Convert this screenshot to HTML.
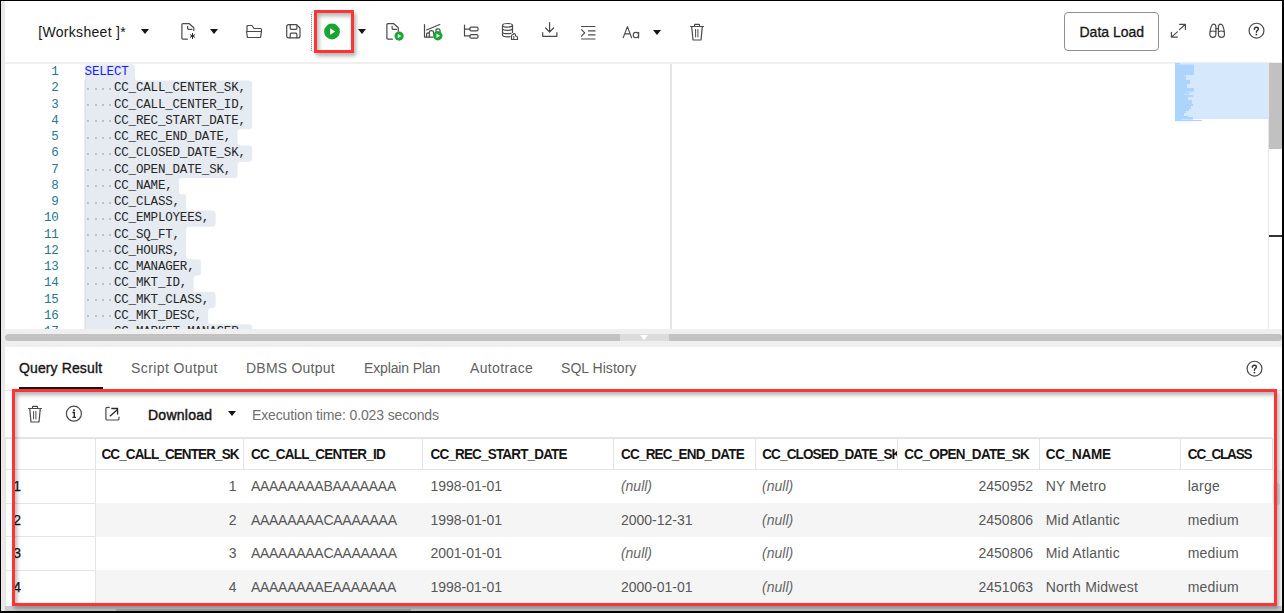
<!DOCTYPE html>
<html><head><meta charset="utf-8">
<style>
*{box-sizing:border-box;margin:0;padding:0}
html,body{width:1284px;height:613px;overflow:hidden;background:#fff}
body{position:relative;font-family:"Liberation Sans",sans-serif;color:#161513}
.a{position:absolute}
.tri{position:absolute;width:0;height:0;border-left:4.5px solid transparent;border-right:4.5px solid transparent;border-top:5px solid #161513}
svg{position:absolute;overflow:visible}
.mono{font-family:"Liberation Mono",monospace;font-size:12px}
.ln{position:absolute;left:20px;width:38.6px;text-align:right;color:#237893;font-family:"Liberation Mono",monospace;font-size:12.5px;letter-spacing:-0.17px;height:16.25px;line-height:16.25px}
.cl{position:absolute;left:85px;height:16.25px;line-height:16.25px;font-family:"Liberation Mono",monospace;font-size:12.5px;letter-spacing:-0.17px;color:#262626;white-space:pre}
.sel{position:absolute;left:84px;height:16.2px;background:#e5ebf1}
.tab{position:absolute;top:360.4px;font-size:14px;color:#616161;white-space:pre}
.hd{position:absolute;top:447.3px;font-size:13.5px;font-weight:bold;color:#161513;white-space:pre;letter-spacing:-0.9px;transform:scaleY(1.09);transform-origin:0 12.2px}
.cell{position:absolute;font-size:14px;color:#575757;white-space:pre}
.nul{font-style:italic;color:#666}
</style></head><body>
<!-- left gray strip -->
<div class="a" style="left:1px;top:1px;width:4px;height:611px;background:#e9e9e9"></div>
<!-- toolbar bottom border -->
<div class="a" style="left:5px;top:62px;width:1277px;height:2px;background:#f0f0f0"></div>

<!-- TOOLBAR -->
<div class="a" style="left:38.3px;top:24.3px;font-size:14px;white-space:pre;color:#161513;letter-spacing:0.3px">[Worksheet ]*</div>
<div class="tri" style="left:140.5px;top:29px"></div>

<svg style="left:181px;top:23px" width="16" height="18" viewBox="0 0 16 18"><path d="M6.4 16.2H1.9Q0.9 16.2 0.9 15.2V1.7Q0.9 0.7 1.9 0.7H8.3L12.8 4.8V7.4" stroke="#4a4a4a" fill="none" stroke-width="1.2" stroke-linecap="round" stroke-linejoin="round"/><path d="M6.6 3.3V5.3Q6.6 6.3 7.6 6.3H11" stroke="#4a4a4a" fill="none" stroke-width="1.2" stroke-linecap="round" stroke-linejoin="round"/><path d="M11.5 10V16M8.9 11.5L14.1 14.5M8.9 14.5L14.1 11.5" stroke="#222" stroke-width="0.95" fill="none"/></svg>
<div class="tri" style="left:210.3px;top:28.7px"></div>
<svg style="left:245px;top:23px" width="18" height="16" viewBox="0 0 18 16"><path d="M2 7.5V3.5Q2 2.5 3 2.5H7L9 5.5H15.5Q16.5 5.5 16.5 6.5V8" stroke="#4a4a4a" fill="none" stroke-width="1.2" stroke-linecap="round" stroke-linejoin="round"/><path d="M1.5 8.5H16.5L15.5 14.5H2.5Z" stroke="#4a4a4a" fill="none" stroke-width="1.2" stroke-linecap="round" stroke-linejoin="round"/></svg>
<svg style="left:285px;top:23px" width="16" height="16" viewBox="0 0 16 16"><path d="M1.7 3.7Q1.7 1.6 3.7 1.6H11.5L15 5V12.9Q15 14.9 13 14.9H3.7Q1.7 14.9 1.7 12.9Z" stroke="#4a4a4a" fill="none" stroke-width="1.2" stroke-linecap="round" stroke-linejoin="round"/><path d="M5.2 1.7V5.3Q5.2 6.3 6.2 6.3H10.9Q11.9 6.3 11.9 5.3V2.2M5.2 14.8V11.2Q5.2 10.2 6.2 10.2H10.9Q11.9 10.2 11.9 11.2V14.8" stroke="#4a4a4a" fill="none" stroke-width="1.2" stroke-linecap="round" stroke-linejoin="round"/></svg>
<svg style="left:322px;top:21px" width="20" height="20" viewBox="0 0 20 20"><circle cx="10" cy="10.5" r="7.9" fill="#1aa532"/><path d="M8.2 7.3L13.2 10.5L8.2 13.7Z" fill="#fff"/></svg>
<div class="a" style="left:310.5px;top:12px;width:2px;height:40px;border-left:1.5px dotted #777;border-radius:3px 0 0 3px"></div>
<div class="tri" style="left:358.4px;top:28.8px"></div>
<svg style="left:386px;top:23px" width="18" height="18" viewBox="0 0 18 18"><path d="M6.4 16.2H1.9Q0.9 16.2 0.9 15.2V1.7Q0.9 0.7 1.9 0.7H7.8L12.3 4.8V8.3" stroke="#4a4a4a" fill="none" stroke-width="1.2" stroke-linecap="round" stroke-linejoin="round"/><path d="M6.1 3.3V5.3Q6.1 6.3 7.1 6.3H10.5" stroke="#4a4a4a" fill="none" stroke-width="1.2" stroke-linecap="round" stroke-linejoin="round"/><circle cx="13.1" cy="13.1" r="4.6" fill="#1aa532"/><path d="M11.8 10.9L15.3 13.1L11.8 15.3Z" fill="#fff"/></svg>
<svg style="left:423px;top:22px" width="20" height="19" viewBox="0 0 20 19"><path d="M1.5 2.7V15.1H10" stroke="#4a4a4a" fill="none" stroke-width="1.2" stroke-linecap="round" stroke-linejoin="round"/><path d="M3.5 8L16.8 2.5" stroke="#4a4a4a" fill="none" stroke-width="1.2" stroke-linecap="round" stroke-linejoin="round"/><path d="M3.6 15V12.1Q3.6 10.9 4.9 10.9Q6.3 10.9 6.3 12.1V15M6.3 15V9.9Q6.3 8.6 8.4 8.6Q10.5 8.6 10.5 9.9V12M13 10V8Q13 6.8 15 6.8Q17 6.8 17 8V10" stroke="#4a4a4a" fill="none" stroke-width="1.2" stroke-linecap="round" stroke-linejoin="round"/><circle cx="14.8" cy="13.7" r="4.7" fill="#1aa532"/><path d="M13.5 11.5L17 13.7L13.5 15.9Z" fill="#fff"/></svg>
<svg style="left:462px;top:23px" width="18" height="17" viewBox="0 0 18 17"><path d="M2.5 2V12.9H7.9M2.5 6.2H7.9" stroke="#4a4a4a" fill="none" stroke-width="1.2" stroke-linecap="round" stroke-linejoin="round"/><rect x="7.9" y="4.1" width="8.1" height="3.8" rx="1.2" stroke="#4a4a4a" fill="none" stroke-width="1.2" stroke-linecap="round" stroke-linejoin="round"/><rect x="7.9" y="11.6" width="8.1" height="3.5" rx="1.2" stroke="#4a4a4a" fill="none" stroke-width="1.2" stroke-linecap="round" stroke-linejoin="round"/></svg>
<svg style="left:501px;top:22px" width="20" height="19" viewBox="0 0 20 19"><ellipse cx="6.5" cy="3.3" rx="5" ry="1.8" stroke="#4a4a4a" fill="none" stroke-width="1.2" stroke-linecap="round" stroke-linejoin="round"/><path d="M1.5 3.3V13Q1.5 14.8 6.5 14.8Q8 14.8 9 14.6M11.5 3.3V10.5M1.5 6.6Q1.5 8.4 6.5 8.4Q11.5 8.4 11.5 6.6M1.5 9.9Q1.5 11.7 6.5 11.7Q9 11.7 10 11.2" stroke="#4a4a4a" fill="none" stroke-width="1.2" stroke-linecap="round" stroke-linejoin="round"/><path d="M10.5 17.5V14Q10.5 12.5 12 12.5L13 11.5Q14.5 11.5 14.5 13V14Q16.5 14 16.5 15.5V17.5Z" stroke="#4a4a4a" fill="none" stroke-width="1.2" stroke-linecap="round" stroke-linejoin="round"/><path d="M12.8 14V17.5" stroke="#4a4a4a" stroke-width="1"/></svg>
<svg style="left:541px;top:21px" width="18" height="17" viewBox="0 0 18 17"><path d="M8.6 1.5V10.8M4.6 7L8.6 11L12.6 7" stroke="#4a4a4a" fill="none" stroke-width="1.2" stroke-linecap="round" stroke-linejoin="round"/><path d="M1.7 11.5V15.3H15.9V11.5" stroke="#4a4a4a" fill="none" stroke-width="1.2" stroke-linecap="round" stroke-linejoin="round"/></svg>
<svg style="left:580px;top:25px" width="17" height="16" viewBox="0 0 17 16"><path d="M1.5 1.5H15M8.5 5.9H15M8.5 9.9H15M1.5 14H15" stroke="#4a4a4a" fill="none" stroke-width="1.2" stroke-linecap="round" stroke-linejoin="round"/><path d="M1.5 4.6L4.7 7.9L1.5 11.2" stroke="#4a4a4a" fill="none" stroke-width="1.2" stroke-linecap="round" stroke-linejoin="round"/></svg>
<svg style="left:621px;top:25px" width="20" height="15" viewBox="0 0 20 15"><path d="M2.2 12.8L6.4 1.6L10.6 12.8M3.7 8.9H9.1" stroke="#4a4a4a" fill="none" stroke-width="1.1" stroke-linecap="round" stroke-linejoin="round"/><circle cx="14.9" cy="10.1" r="2.7" stroke="#4a4a4a" fill="none" stroke-width="1.1"/><path d="M17.6 7.2V12.9" stroke="#4a4a4a" stroke-width="1.1" stroke-linecap="round"/></svg>
<div class="tri" style="left:653.3px;top:29.6px"></div>
<svg style="left:689px;top:23px" width="16" height="19" viewBox="0 0 16 19"><path d="M1.5 3.5H14.5M5.5 3.3V2Q5.5 1.3 6.2 1.3H9.8Q10.5 1.3 10.5 2V3.3M2.7 3.6L4 17H12L13.3 3.6" stroke="#4a4a4a" fill="none" stroke-width="1.2" stroke-linecap="round" stroke-linejoin="round"/><path d="M6.6 6V14.3M8.9 6V14.3" stroke="#4a4a4a" stroke-width="1"/></svg>
<svg style="left:1170px;top:22px" width="17" height="17" viewBox="0 0 17 17"><path d="M9.4 7.6L15.4 2.3M9.6 2.3H15.4V7.4M7.4 9.9L1.4 15.1M1.4 10.3V15.1H7.4" stroke="#4a4a4a" fill="none" stroke-width="1.2" stroke-linecap="round" stroke-linejoin="round"/></svg>
<svg style="left:1208px;top:22px" width="19" height="17" viewBox="0 0 19 17"><path d="M5.6 2.1Q7.9 2.1 7.9 5V12Q7.9 15.3 4.9 15.3Q1.8 15.3 1.8 12Q1.8 8.5 3.2 4.6Q4 2.1 5.6 2.1Z" stroke="#4a4a4a" fill="none" stroke-width="1.2" stroke-linecap="round" stroke-linejoin="round"/><path d="M12.7 2.1Q10.4 2.1 10.4 5V12Q10.4 15.3 13.4 15.3Q16.5 15.3 16.5 12Q16.5 8.5 15.1 4.6Q14.3 2.1 12.7 2.1Z" stroke="#4a4a4a" fill="none" stroke-width="1.2" stroke-linecap="round" stroke-linejoin="round"/><path d="M2.3 9.6Q4.9 8.4 7.8 9.6M10.5 9.6Q13.4 8.4 16 9.6M7.9 6.6H10.4" stroke="#4a4a4a" fill="none" stroke-width="1.2" stroke-linecap="round" stroke-linejoin="round"/></svg>
<svg style="left:1247px;top:21px" width="19" height="19" viewBox="0 0 19 19"><circle cx="9.5" cy="9.65" r="7.4" stroke="#4a4a4a" fill="none" stroke-width="1.2" stroke-linecap="round" stroke-linejoin="round"/><path d="M7.4 8.3Q7.4 6.3 9.4 6.3Q11.3 6.3 11.3 8Q11.3 9.1 10.2 9.7Q9.4 10.1 9.4 11.3" stroke="#333" fill="none" stroke-width="1.45" stroke-linecap="round"/><circle cx="9.4" cy="13.6" r="0.95" fill="#333"/></svg>
<svg style="left:1245px;top:359px" width="19" height="19" viewBox="0 0 19 19"><circle cx="9.5" cy="9.65" r="7.4" stroke="#4a4a4a" fill="none" stroke-width="1.2" stroke-linecap="round" stroke-linejoin="round"/><path d="M7.4 8.3Q7.4 6.3 9.4 6.3Q11.3 6.3 11.3 8Q11.3 9.1 10.2 9.7Q9.4 10.1 9.4 11.3" stroke="#333" fill="none" stroke-width="1.45" stroke-linecap="round"/><circle cx="9.4" cy="13.6" r="0.95" fill="#333"/></svg>
<svg style="left:27px;top:404px" width="16" height="20" viewBox="0 0 16 20"><path d="M1.5 4.5H14.5M5.5 4.3V3Q5.5 2.3 6.2 2.3H9.8Q10.5 2.3 10.5 3V4.3M2.7 4.6L4 18H12L13.3 4.6" stroke="#4a4a4a" fill="none" stroke-width="1.2" stroke-linecap="round" stroke-linejoin="round"/><path d="M6.6 7V15.3M8.9 7V15.3" stroke="#4a4a4a" stroke-width="1"/></svg>
<svg style="left:65px;top:405px" width="18" height="18" viewBox="0 0 18 18"><circle cx="8.9" cy="8.7" r="7.5" stroke="#4a4a4a" fill="none" stroke-width="1.2" stroke-linecap="round" stroke-linejoin="round"/><path d="M7.4 7.5H9.3V12.4M7.4 12.4H11" stroke="#2a2a2a" stroke-width="1.4" fill="none"/><circle cx="9" cy="5.2" r="1" fill="#2a2a2a"/></svg>
<svg style="left:104px;top:405px" width="18" height="18" viewBox="0 0 18 18"><path d="M5.3 2.3H3.2Q1.9 2.3 1.9 3.6V13.7Q1.9 15 3.2 15H13.7Q15 15 15 13.7V12.1" stroke="#4a4a4a" fill="none" stroke-width="1.2" stroke-linecap="round" stroke-linejoin="round"/><path d="M6.2 10.9L13.6 4.4M7.8 3.5H13.6V9" stroke="#2a2a2a" stroke-width="1.3" fill="none" stroke-linecap="round" stroke-linejoin="round"/></svg>

<!-- Data Load button -->
<div class="a" style="left:1064px;top:12px;width:95px;height:39px;border:1px solid #8f8f8f;border-radius:4px"></div>
<div class="a" style="left:1079.5px;top:24.3px;font-size:14px;white-space:pre;color:#161513;-webkit-text-stroke:0.3px #161513">Data Load</div>

<!-- EDITOR -->
<div class="a" style="left:5px;top:64px;width:1263px;height:265px;overflow:hidden">
<svg style="left:0;top:0" width="1263" height="265"><path d="M82.80 0.20L126.91 0.20Q129.91 0.20 129.91 3.20L129.91 13.45Q129.91 16.45 132.91 16.45L244.19 16.45Q247.19 16.45 247.19 19.45L247.19 62.20Q247.19 65.20 244.19 65.20L235.53 65.20Q232.53 65.20 232.53 68.20L232.53 78.45Q232.53 81.45 235.53 81.45L244.19 81.45Q247.19 81.45 247.19 84.45L247.19 94.70Q247.19 97.70 244.19 97.70L235.53 97.70Q232.53 97.70 232.53 100.70L232.53 110.95Q232.53 113.95 229.53 113.95L176.89 113.95Q173.89 113.95 173.89 116.95L173.89 127.20Q173.89 130.20 176.89 130.20L178.22 130.20Q181.22 130.20 181.22 133.20L181.22 143.45Q181.22 146.45 184.22 146.45L207.54 146.45Q210.54 146.45 210.54 149.45L210.54 159.70Q210.54 162.70 207.54 162.70L184.22 162.70Q181.22 162.70 181.22 165.70L181.22 192.20Q181.22 195.20 184.22 195.20L192.88 195.20Q195.88 195.20 195.88 198.20L195.88 208.45Q195.88 211.45 192.88 211.45L191.55 211.45Q188.55 211.45 188.55 214.45L188.55 224.70Q188.55 227.70 191.55 227.70L207.54 227.70Q210.54 227.70 210.54 230.70L210.54 240.95Q210.54 243.95 207.54 243.95L206.21 243.95Q203.21 243.95 203.21 246.95L203.21 257.20Q203.21 260.20 206.21 260.20L244.19 260.20Q247.19 260.20 247.19 263.20L247.19 273.45Q247.19 276.45 244.19 276.45L82.80 276.45Q79.80 276.45 79.80 273.45L79.80 3.20Q79.80 0.20 82.80 0.20Z" fill="#e5ebf1"/><path d="M79.9 16.5V265" stroke="rgba(0,0,0,.10)" stroke-width="1"/></svg>
<div class="ln" style="left:15px;top:0.20px">1</div>
<div class="cl" style="left:79.6px;top:0.20px;color:#1a1aff">SELECT</div>
<div class="ln" style="left:15px;top:16.45px">2</div>
<div class="a" style="left:82.2px;top:23.9px;width:2px;height:2px;border-radius:1px;background:rgba(40,40,40,.28)"></div>
<div class="a" style="left:89.5px;top:23.9px;width:2px;height:2px;border-radius:1px;background:rgba(40,40,40,.28)"></div>
<div class="a" style="left:96.9px;top:23.9px;width:2px;height:2px;border-radius:1px;background:rgba(40,40,40,.28)"></div>
<div class="a" style="left:104.2px;top:23.9px;width:2px;height:2px;border-radius:1px;background:rgba(40,40,40,.28)"></div>
<div class="cl" style="left:108.9px;top:16.45px">CC_CALL_CENTER_SK,</div>
<div class="ln" style="left:15px;top:32.70px">3</div>
<div class="a" style="left:82.2px;top:40.1px;width:2px;height:2px;border-radius:1px;background:rgba(40,40,40,.28)"></div>
<div class="a" style="left:89.5px;top:40.1px;width:2px;height:2px;border-radius:1px;background:rgba(40,40,40,.28)"></div>
<div class="a" style="left:96.9px;top:40.1px;width:2px;height:2px;border-radius:1px;background:rgba(40,40,40,.28)"></div>
<div class="a" style="left:104.2px;top:40.1px;width:2px;height:2px;border-radius:1px;background:rgba(40,40,40,.28)"></div>
<div class="cl" style="left:108.9px;top:32.70px">CC_CALL_CENTER_ID,</div>
<div class="ln" style="left:15px;top:48.95px">4</div>
<div class="a" style="left:82.2px;top:56.4px;width:2px;height:2px;border-radius:1px;background:rgba(40,40,40,.28)"></div>
<div class="a" style="left:89.5px;top:56.4px;width:2px;height:2px;border-radius:1px;background:rgba(40,40,40,.28)"></div>
<div class="a" style="left:96.9px;top:56.4px;width:2px;height:2px;border-radius:1px;background:rgba(40,40,40,.28)"></div>
<div class="a" style="left:104.2px;top:56.4px;width:2px;height:2px;border-radius:1px;background:rgba(40,40,40,.28)"></div>
<div class="cl" style="left:108.9px;top:48.95px">CC_REC_START_DATE,</div>
<div class="ln" style="left:15px;top:65.20px">5</div>
<div class="a" style="left:82.2px;top:72.6px;width:2px;height:2px;border-radius:1px;background:rgba(40,40,40,.28)"></div>
<div class="a" style="left:89.5px;top:72.6px;width:2px;height:2px;border-radius:1px;background:rgba(40,40,40,.28)"></div>
<div class="a" style="left:96.9px;top:72.6px;width:2px;height:2px;border-radius:1px;background:rgba(40,40,40,.28)"></div>
<div class="a" style="left:104.2px;top:72.6px;width:2px;height:2px;border-radius:1px;background:rgba(40,40,40,.28)"></div>
<div class="cl" style="left:108.9px;top:65.20px">CC_REC_END_DATE,</div>
<div class="ln" style="left:15px;top:81.45px">6</div>
<div class="a" style="left:82.2px;top:88.8px;width:2px;height:2px;border-radius:1px;background:rgba(40,40,40,.28)"></div>
<div class="a" style="left:89.5px;top:88.8px;width:2px;height:2px;border-radius:1px;background:rgba(40,40,40,.28)"></div>
<div class="a" style="left:96.9px;top:88.8px;width:2px;height:2px;border-radius:1px;background:rgba(40,40,40,.28)"></div>
<div class="a" style="left:104.2px;top:88.8px;width:2px;height:2px;border-radius:1px;background:rgba(40,40,40,.28)"></div>
<div class="cl" style="left:108.9px;top:81.45px">CC_CLOSED_DATE_SK,</div>
<div class="ln" style="left:15px;top:97.70px">7</div>
<div class="a" style="left:82.2px;top:105.1px;width:2px;height:2px;border-radius:1px;background:rgba(40,40,40,.28)"></div>
<div class="a" style="left:89.5px;top:105.1px;width:2px;height:2px;border-radius:1px;background:rgba(40,40,40,.28)"></div>
<div class="a" style="left:96.9px;top:105.1px;width:2px;height:2px;border-radius:1px;background:rgba(40,40,40,.28)"></div>
<div class="a" style="left:104.2px;top:105.1px;width:2px;height:2px;border-radius:1px;background:rgba(40,40,40,.28)"></div>
<div class="cl" style="left:108.9px;top:97.70px">CC_OPEN_DATE_SK,</div>
<div class="ln" style="left:15px;top:113.95px">8</div>
<div class="a" style="left:82.2px;top:121.3px;width:2px;height:2px;border-radius:1px;background:rgba(40,40,40,.28)"></div>
<div class="a" style="left:89.5px;top:121.3px;width:2px;height:2px;border-radius:1px;background:rgba(40,40,40,.28)"></div>
<div class="a" style="left:96.9px;top:121.3px;width:2px;height:2px;border-radius:1px;background:rgba(40,40,40,.28)"></div>
<div class="a" style="left:104.2px;top:121.3px;width:2px;height:2px;border-radius:1px;background:rgba(40,40,40,.28)"></div>
<div class="cl" style="left:108.9px;top:113.95px">CC_NAME,</div>
<div class="ln" style="left:15px;top:130.20px">9</div>
<div class="a" style="left:82.2px;top:137.6px;width:2px;height:2px;border-radius:1px;background:rgba(40,40,40,.28)"></div>
<div class="a" style="left:89.5px;top:137.6px;width:2px;height:2px;border-radius:1px;background:rgba(40,40,40,.28)"></div>
<div class="a" style="left:96.9px;top:137.6px;width:2px;height:2px;border-radius:1px;background:rgba(40,40,40,.28)"></div>
<div class="a" style="left:104.2px;top:137.6px;width:2px;height:2px;border-radius:1px;background:rgba(40,40,40,.28)"></div>
<div class="cl" style="left:108.9px;top:130.20px">CC_CLASS,</div>
<div class="ln" style="left:15px;top:146.45px">10</div>
<div class="a" style="left:82.2px;top:153.8px;width:2px;height:2px;border-radius:1px;background:rgba(40,40,40,.28)"></div>
<div class="a" style="left:89.5px;top:153.8px;width:2px;height:2px;border-radius:1px;background:rgba(40,40,40,.28)"></div>
<div class="a" style="left:96.9px;top:153.8px;width:2px;height:2px;border-radius:1px;background:rgba(40,40,40,.28)"></div>
<div class="a" style="left:104.2px;top:153.8px;width:2px;height:2px;border-radius:1px;background:rgba(40,40,40,.28)"></div>
<div class="cl" style="left:108.9px;top:146.45px">CC_EMPLOYEES,</div>
<div class="ln" style="left:15px;top:162.70px">11</div>
<div class="a" style="left:82.2px;top:170.1px;width:2px;height:2px;border-radius:1px;background:rgba(40,40,40,.28)"></div>
<div class="a" style="left:89.5px;top:170.1px;width:2px;height:2px;border-radius:1px;background:rgba(40,40,40,.28)"></div>
<div class="a" style="left:96.9px;top:170.1px;width:2px;height:2px;border-radius:1px;background:rgba(40,40,40,.28)"></div>
<div class="a" style="left:104.2px;top:170.1px;width:2px;height:2px;border-radius:1px;background:rgba(40,40,40,.28)"></div>
<div class="cl" style="left:108.9px;top:162.70px">CC_SQ_FT,</div>
<div class="ln" style="left:15px;top:178.95px">12</div>
<div class="a" style="left:82.2px;top:186.3px;width:2px;height:2px;border-radius:1px;background:rgba(40,40,40,.28)"></div>
<div class="a" style="left:89.5px;top:186.3px;width:2px;height:2px;border-radius:1px;background:rgba(40,40,40,.28)"></div>
<div class="a" style="left:96.9px;top:186.3px;width:2px;height:2px;border-radius:1px;background:rgba(40,40,40,.28)"></div>
<div class="a" style="left:104.2px;top:186.3px;width:2px;height:2px;border-radius:1px;background:rgba(40,40,40,.28)"></div>
<div class="cl" style="left:108.9px;top:178.95px">CC_HOURS,</div>
<div class="ln" style="left:15px;top:195.20px">13</div>
<div class="a" style="left:82.2px;top:202.6px;width:2px;height:2px;border-radius:1px;background:rgba(40,40,40,.28)"></div>
<div class="a" style="left:89.5px;top:202.6px;width:2px;height:2px;border-radius:1px;background:rgba(40,40,40,.28)"></div>
<div class="a" style="left:96.9px;top:202.6px;width:2px;height:2px;border-radius:1px;background:rgba(40,40,40,.28)"></div>
<div class="a" style="left:104.2px;top:202.6px;width:2px;height:2px;border-radius:1px;background:rgba(40,40,40,.28)"></div>
<div class="cl" style="left:108.9px;top:195.20px">CC_MANAGER,</div>
<div class="ln" style="left:15px;top:211.45px">14</div>
<div class="a" style="left:82.2px;top:218.8px;width:2px;height:2px;border-radius:1px;background:rgba(40,40,40,.28)"></div>
<div class="a" style="left:89.5px;top:218.8px;width:2px;height:2px;border-radius:1px;background:rgba(40,40,40,.28)"></div>
<div class="a" style="left:96.9px;top:218.8px;width:2px;height:2px;border-radius:1px;background:rgba(40,40,40,.28)"></div>
<div class="a" style="left:104.2px;top:218.8px;width:2px;height:2px;border-radius:1px;background:rgba(40,40,40,.28)"></div>
<div class="cl" style="left:108.9px;top:211.45px">CC_MKT_ID,</div>
<div class="ln" style="left:15px;top:227.70px">15</div>
<div class="a" style="left:82.2px;top:235.1px;width:2px;height:2px;border-radius:1px;background:rgba(40,40,40,.28)"></div>
<div class="a" style="left:89.5px;top:235.1px;width:2px;height:2px;border-radius:1px;background:rgba(40,40,40,.28)"></div>
<div class="a" style="left:96.9px;top:235.1px;width:2px;height:2px;border-radius:1px;background:rgba(40,40,40,.28)"></div>
<div class="a" style="left:104.2px;top:235.1px;width:2px;height:2px;border-radius:1px;background:rgba(40,40,40,.28)"></div>
<div class="cl" style="left:108.9px;top:227.70px">CC_MKT_CLASS,</div>
<div class="ln" style="left:15px;top:243.95px">16</div>
<div class="a" style="left:82.2px;top:251.3px;width:2px;height:2px;border-radius:1px;background:rgba(40,40,40,.28)"></div>
<div class="a" style="left:89.5px;top:251.3px;width:2px;height:2px;border-radius:1px;background:rgba(40,40,40,.28)"></div>
<div class="a" style="left:96.9px;top:251.3px;width:2px;height:2px;border-radius:1px;background:rgba(40,40,40,.28)"></div>
<div class="a" style="left:104.2px;top:251.3px;width:2px;height:2px;border-radius:1px;background:rgba(40,40,40,.28)"></div>
<div class="cl" style="left:108.9px;top:243.95px">CC_MKT_DESC,</div>
<div class="ln" style="left:15px;top:260.20px">17</div>
<div class="a" style="left:82.2px;top:267.6px;width:2px;height:2px;border-radius:1px;background:rgba(40,40,40,.28)"></div>
<div class="a" style="left:89.5px;top:267.6px;width:2px;height:2px;border-radius:1px;background:rgba(40,40,40,.28)"></div>
<div class="a" style="left:96.9px;top:267.6px;width:2px;height:2px;border-radius:1px;background:rgba(40,40,40,.28)"></div>
<div class="a" style="left:104.2px;top:267.6px;width:2px;height:2px;border-radius:1px;background:rgba(40,40,40,.28)"></div>
<div class="cl" style="left:108.9px;top:260.20px">CC_MARKET_MANAGER,</div>
</div>

<!-- editor vertical split line -->
<div class="a" style="left:670px;top:64px;width:2px;height:265px;background:#e6e6e6"></div>

<!-- minimap -->
<div class="a" style="left:1175px;top:63px;width:93px;height:56px;background:#d6e8fc"></div>
<svg style="left:1175px;top:63px" width="93" height="60"><rect x="0" y="0.0" width="5.0" height="1.5" fill="#add4fc"/><rect x="0" y="1.5" width="19.0" height="10.5" fill="#add4fc"/><rect x="0" y="12.0" width="11.0" height="5.0" fill="#add4fc"/><rect x="0" y="17.0" width="15.0" height="4.0" fill="#add4fc"/><rect x="0" y="21.0" width="12.0" height="4.0" fill="#add4fc"/><rect x="0" y="25.0" width="19.0" height="4.0" fill="#add4fc"/><rect x="0" y="29.0" width="14.0" height="3.0" fill="#add4fc"/><rect x="0" y="32.0" width="18.0" height="2.0" fill="#add4fc"/><rect x="0" y="34.0" width="13.0" height="3.0" fill="#add4fc"/><rect x="0" y="37.0" width="17.0" height="4.0" fill="#add4fc"/><rect x="0" y="41.0" width="18.0" height="2.0" fill="#add4fc"/><rect x="0" y="43.0" width="16.0" height="3.0" fill="#add4fc"/><rect x="0" y="46.0" width="14.0" height="2.0" fill="#add4fc"/><rect x="0" y="48.0" width="11.0" height="2.0" fill="#add4fc"/><rect x="0" y="50.0" width="9.0" height="3.0" fill="#add4fc"/><rect x="0" y="53.0" width="13.0" height="1.0" fill="#add4fc"/><rect x="0" y="54.0" width="18.0" height="3.0" fill="#add4fc"/><rect x="0" y="57.0" width="27.0" height="1.2" fill="#add4fc"/><rect x="5" y="1.0" width="13" height="1" fill="#c5e1fd"/><rect x="9" y="12.5" width="2" height="1.0" fill="#c5e1fd"/><rect x="11" y="28.5" width="8" height="1.0" fill="#c5e1fd"/><rect x="9" y="31.0" width="5" height="1" fill="#c5e1fd"/><rect x="6" y="56.0" width="12" height="1" fill="#c5e1fd"/></svg>
<!-- editor scrollbar -->
<div class="a" style="left:1268px;top:63px;width:1px;height:266px;background:#e8e8e8"></div>
<div class="a" style="left:1269px;top:63px;width:13px;height:86px;background:#c1c1c1"></div>
<div class="a" style="left:1269px;top:235px;width:13px;height:2px;background:#333"></div>

<!-- SPLITTER -->
<div class="a" style="left:5px;top:329px;width:1277px;height:18px;background:#efefef"></div>
<div class="a" style="left:5px;top:334px;width:1277px;height:7px;background:#c2c2c2;border-radius:3.5px"></div>
<div class="a" style="left:620px;top:334px;width:49px;height:7px;background:#dcdcdc"></div>
<div class="a" style="left:640px;top:335px;width:0;height:0;border-left:4.5px solid transparent;border-right:4.5px solid transparent;border-top:5px solid #fff"></div>

<!-- TABS -->
<div class="tab" style="left:19px;color:#161513;-webkit-text-stroke:0.35px #161513;letter-spacing:0.12px">Query Result</div>
<div class="tab" style="left:131px;letter-spacing:0.4px">Script Output</div>
<div class="tab" style="left:246px;letter-spacing:0.22px">DBMS Output</div>
<div class="tab" style="left:364px;letter-spacing:-0.14px">Explain Plan</div>
<div class="tab" style="left:470px;letter-spacing:0.37px">Autotrace</div>
<div class="tab" style="left:561px;letter-spacing:0.04px">SQL History</div>
<div class="a" style="left:19px;top:387px;width:84px;height:2px;background:#161513"></div>
<div class="a" style="left:5px;top:390px;width:1277px;height:1px;background:#e5e5e5"></div>

<!-- RESULT PANEL -->
<div class="a" style="left:148px;top:406.7px;font-size:14px;letter-spacing:0.25px;-webkit-text-stroke:0.45px #161513;white-space:pre;color:#161513">Download</div>
<div class="tri" style="left:227.7px;top:411.2px"></div>
<div class="a" style="left:252px;top:406.7px;font-size:14px;letter-spacing:-0.13px;white-space:pre;color:#707070">Execution time: 0.023 seconds</div>
<div class="a" style="left:95px;top:503.0px;width:1180px;height:33.5px;background:#f5f5f5"></div>
<div class="a" style="left:95px;top:570.0px;width:1180px;height:33.5px;background:#f5f5f5"></div>
<div class="a" style="left:5px;top:437.0px;width:1267px;height:1.5px;background:#e4e4e4"></div>
<div class="a" style="left:5px;top:468.5px;width:1267px;height:1.5px;background:#e4e4e4"></div>
<div class="a" style="left:5px;top:502.5px;width:90px;height:1px;background:#e4e4e4"></div>
<div class="a" style="left:5px;top:536.0px;width:90px;height:1px;background:#e4e4e4"></div>
<div class="a" style="left:5px;top:569.5px;width:90px;height:1px;background:#e4e4e4"></div>
<div class="a" style="left:94.5px;top:438.0px;width:1px;height:168.0px;background:#e4e4e4"></div>
<div class="a" style="left:242.5px;top:438.0px;width:1px;height:31.5px;background:#e4e4e4"></div>
<div class="a" style="left:422.0px;top:438.0px;width:1px;height:31.5px;background:#e4e4e4"></div>
<div class="a" style="left:613.0px;top:438.0px;width:1px;height:31.5px;background:#e4e4e4"></div>
<div class="a" style="left:755.0px;top:438.0px;width:1px;height:31.5px;background:#e4e4e4"></div>
<div class="a" style="left:897.0px;top:438.0px;width:1px;height:31.5px;background:#e4e4e4"></div>
<div class="a" style="left:1039.0px;top:438.0px;width:1px;height:31.5px;background:#e4e4e4"></div>
<div class="a" style="left:1180.0px;top:438.0px;width:1px;height:31.5px;background:#e4e4e4"></div>
<div class="a" style="left:1271.5px;top:438.0px;width:1px;height:31.5px;background:#e4e4e4"></div>
<div class="a" style="left:5px;top:438px;width:1px;height:175px;background:#e4e4e4"></div>
<div class="hd" style="left:101.5px;width:141.0px;overflow:hidden;letter-spacing:-0.89px">CC_CALL_CENTER_SK</div>
<div class="hd" style="left:251.0px;width:171.0px;overflow:hidden;letter-spacing:-0.77px">CC_CALL_CENTER_ID</div>
<div class="hd" style="left:430.5px;width:182.5px;overflow:hidden;letter-spacing:-0.83px">CC_REC_START_DATE</div>
<div class="hd" style="left:621.0px;width:134.0px;overflow:hidden;letter-spacing:-0.79px">CC_REC_END_DATE</div>
<div class="hd" style="left:762.2px;width:134.8px;overflow:hidden;letter-spacing:-0.85px">CC_CLOSED_DATE_SK</div>
<div class="hd" style="left:904.3px;width:134.7px;overflow:hidden;letter-spacing:-0.66px">CC_OPEN_DATE_SK</div>
<div class="hd" style="left:1045.8px;width:134.2px;overflow:hidden;letter-spacing:-0.27px">CC_NAME</div>
<div class="hd" style="left:1187.8px;width:83.7px;overflow:hidden;letter-spacing:-1.14px">CC_CLASS</div>
<div class="cell" style="left:13.3px;top:478.4px;color:#161513;-webkit-text-stroke:0.25px #161513">1</div>
<div class="cell" style="left:95.0px;width:141.5px;text-align:right;top:478.4px">1</div>
<div class="cell" style="left:250.9px;top:478.4px;letter-spacing:-0.27px">AAAAAAAABAAAAAAA</div>
<div class="cell" style="left:430.4px;top:478.4px;letter-spacing:0px">1998-01-01</div>
<div class="cell nul" style="left:620.9px;top:478.4px;letter-spacing:0px">(null)</div>
<div class="cell nul" style="left:762.1px;top:478.4px;letter-spacing:0px">(null)</div>
<div class="cell" style="left:897.5px;width:135.5px;text-align:right;top:478.4px">2450952</div>
<div class="cell" style="left:1045.7px;top:478.4px;letter-spacing:0.22px">NY Metro</div>
<div class="cell" style="left:1187.7px;top:478.4px;letter-spacing:0.22px">large</div>
<div class="cell" style="left:13.3px;top:511.9px;color:#161513;-webkit-text-stroke:0.25px #161513">2</div>
<div class="cell" style="left:95.0px;width:141.5px;text-align:right;top:511.9px">2</div>
<div class="cell" style="left:250.9px;top:511.9px;letter-spacing:-0.27px">AAAAAAAACAAAAAAA</div>
<div class="cell" style="left:430.4px;top:511.9px;letter-spacing:0px">1998-01-01</div>
<div class="cell" style="left:620.9px;top:511.9px;letter-spacing:0px">2000-12-31</div>
<div class="cell nul" style="left:762.1px;top:511.9px;letter-spacing:0px">(null)</div>
<div class="cell" style="left:897.5px;width:135.5px;text-align:right;top:511.9px">2450806</div>
<div class="cell" style="left:1045.7px;top:511.9px;letter-spacing:0.22px">Mid Atlantic</div>
<div class="cell" style="left:1187.7px;top:511.9px;letter-spacing:0.22px">medium</div>
<div class="cell" style="left:13.3px;top:545.4px;color:#161513;-webkit-text-stroke:0.25px #161513">3</div>
<div class="cell" style="left:95.0px;width:141.5px;text-align:right;top:545.4px">3</div>
<div class="cell" style="left:250.9px;top:545.4px;letter-spacing:-0.27px">AAAAAAAACAAAAAAA</div>
<div class="cell" style="left:430.4px;top:545.4px;letter-spacing:0px">2001-01-01</div>
<div class="cell nul" style="left:620.9px;top:545.4px;letter-spacing:0px">(null)</div>
<div class="cell nul" style="left:762.1px;top:545.4px;letter-spacing:0px">(null)</div>
<div class="cell" style="left:897.5px;width:135.5px;text-align:right;top:545.4px">2450806</div>
<div class="cell" style="left:1045.7px;top:545.4px;letter-spacing:0.22px">Mid Atlantic</div>
<div class="cell" style="left:1187.7px;top:545.4px;letter-spacing:0.22px">medium</div>
<div class="cell" style="left:13.3px;top:578.9px;color:#161513;-webkit-text-stroke:0.25px #161513">4</div>
<div class="cell" style="left:95.0px;width:141.5px;text-align:right;top:578.9px">4</div>
<div class="cell" style="left:250.9px;top:578.9px;letter-spacing:-0.27px">AAAAAAAAEAAAAAAA</div>
<div class="cell" style="left:430.4px;top:578.9px;letter-spacing:0px">1998-01-01</div>
<div class="cell" style="left:620.9px;top:578.9px;letter-spacing:0px">2000-01-01</div>
<div class="cell nul" style="left:762.1px;top:578.9px;letter-spacing:0px">(null)</div>
<div class="cell" style="left:897.5px;width:135.5px;text-align:right;top:578.9px">2451063</div>
<div class="cell" style="left:1045.7px;top:578.9px;letter-spacing:0.22px">North Midwest</div>
<div class="cell" style="left:1187.7px;top:578.9px;letter-spacing:0.22px">medium</div>
<div class="a" style="left:1272px;top:470px;width:10px;height:136px;background:#f7f7f7"></div>
<div class="a" style="left:1273px;top:483px;width:7px;height:22px;border-radius:3px;background:#dedede"></div>
<div class="a" style="left:5px;top:606px;width:1277px;height:5px;background:#c9cdcf"></div>
<div class="a" style="left:116px;top:608.5px;width:295px;height:3px;background:#a9a9a9"></div>

<!-- red box -->
<div class="a" style="left:12px;top:389px;width:1265px;height:217px;border:3px solid #fa3535;box-shadow:inset 2px 3px 4px rgba(0,0,0,.3),2px 3px 4px rgba(0,0,0,.3)"></div>
<!-- red box around run -->
<div class="a" style="left:314px;top:10px;width:40px;height:43px;border:3px solid #fa3535;box-shadow:inset 2px 3px 4px rgba(0,0,0,.3),2px 3px 4px rgba(0,0,0,.3)"></div>

<!-- outer frame -->
<div class="a" style="left:0;top:0;width:1284px;height:1px;background:#000"></div>
<div class="a" style="left:0;top:0;width:1px;height:613px;background:#000"></div>
<div class="a" style="left:1282px;top:0;width:2px;height:613px;background:#000"></div>
<div class="a" style="left:0;top:611px;width:1284px;height:2px;background:#000"></div>
</body></html>
